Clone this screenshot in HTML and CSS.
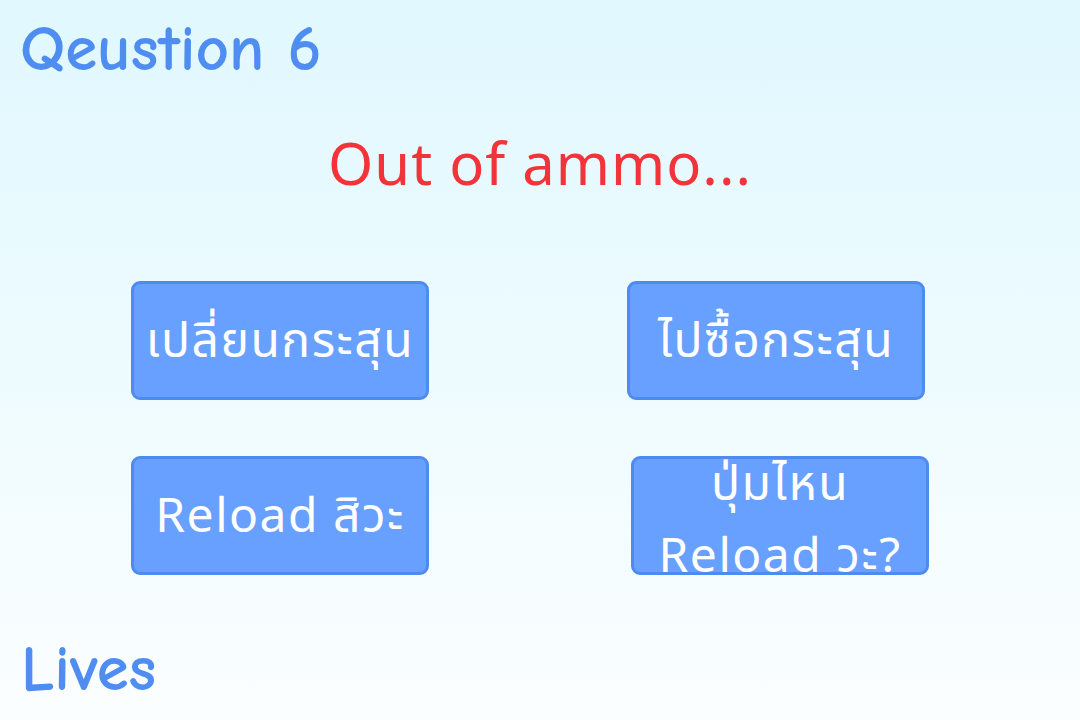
FILE: index.html
```html
<!DOCTYPE html>
<html>
<head>
<meta charset="utf-8">
<link rel="stylesheet" href="styles.css">
</head>
<body>
<div class="screen">
  <div class="question">Qeustion 6</div>
  <div class="prompt">Out of ammo...</div>
  <div class="choices">
    <div class="choice">เปลี่ยนกระสุน</div>
    <div class="choice">ไปซื้อกระสุน</div>
    <div class="choice">Reload สิวะ</div>
    <div class="choice choice-shift"><span class="two-line">ปุ่มไหน<br>Reload วะ?</span></div>
  </div>
  <div class="lives">Lives</div>
</div>
</body>
</html>
```
FILE: styles.css
```css
html, body {
  margin: 0;
  padding: 0;
}
.screen {
  width: 1080px;
  height: 720px;
  overflow: hidden;
  background: linear-gradient(to bottom, #e0f8fe 0%, #fbfeff 100%);
  display: flex;
  flex-direction: column;
  font-family: "Noto Sans Thai", "Noto Sans", "DejaVu Sans", sans-serif;
}
.question {
  font-family: "Comic Neue", "Lato", "Noto Sans", sans-serif;
  font-weight: bold;
  color: #4f8ef0;
  font-size: 65px;
  line-height: 64px;
  padding: 17px 0 0 20px;
  height: 64px;
}
.prompt {
  color: #f2333a;
  font-size: 58px;
  line-height: 60px;
  text-align: center;
  margin-top: 56px;
  height: 60px;
  letter-spacing: 1px;
}
.choices {
  display: grid;
  grid-template-columns: 298px 298px;
  grid-auto-rows: 119px;
  column-gap: 198px;
  row-gap: 56px;
  margin: 84px 0 0 131px;
}
.choice {
  box-sizing: border-box;
  height: 119px;
  width: 298px;
  background: #67a0ff;
  border: 3px solid #4e8bf0;
  border-radius: 9px;
  color: #ffffff;
  font-size: 48px;
  letter-spacing: 1.5px;
  line-height: 70px;
  display: flex;
  align-items: center;
  justify-content: center;
  text-align: center;
  white-space: nowrap;
  padding-top: 4px;
}
.choice-shift {
  margin-left: 4px;
  overflow: hidden;
  align-items: flex-end;
  padding-top: 0;
}
.two-line {
  display: block;
  line-height: 72px;
  margin-bottom: -22px;
}
.lives {
  font-family: "Comic Neue", "Lato", "Noto Sans", sans-serif;
  font-weight: bold;
  color: #4f8ef0;
  font-size: 65px;
  line-height: 62px;
  padding: 0 0 0 21px;
  margin-top: 63px;
}
```
